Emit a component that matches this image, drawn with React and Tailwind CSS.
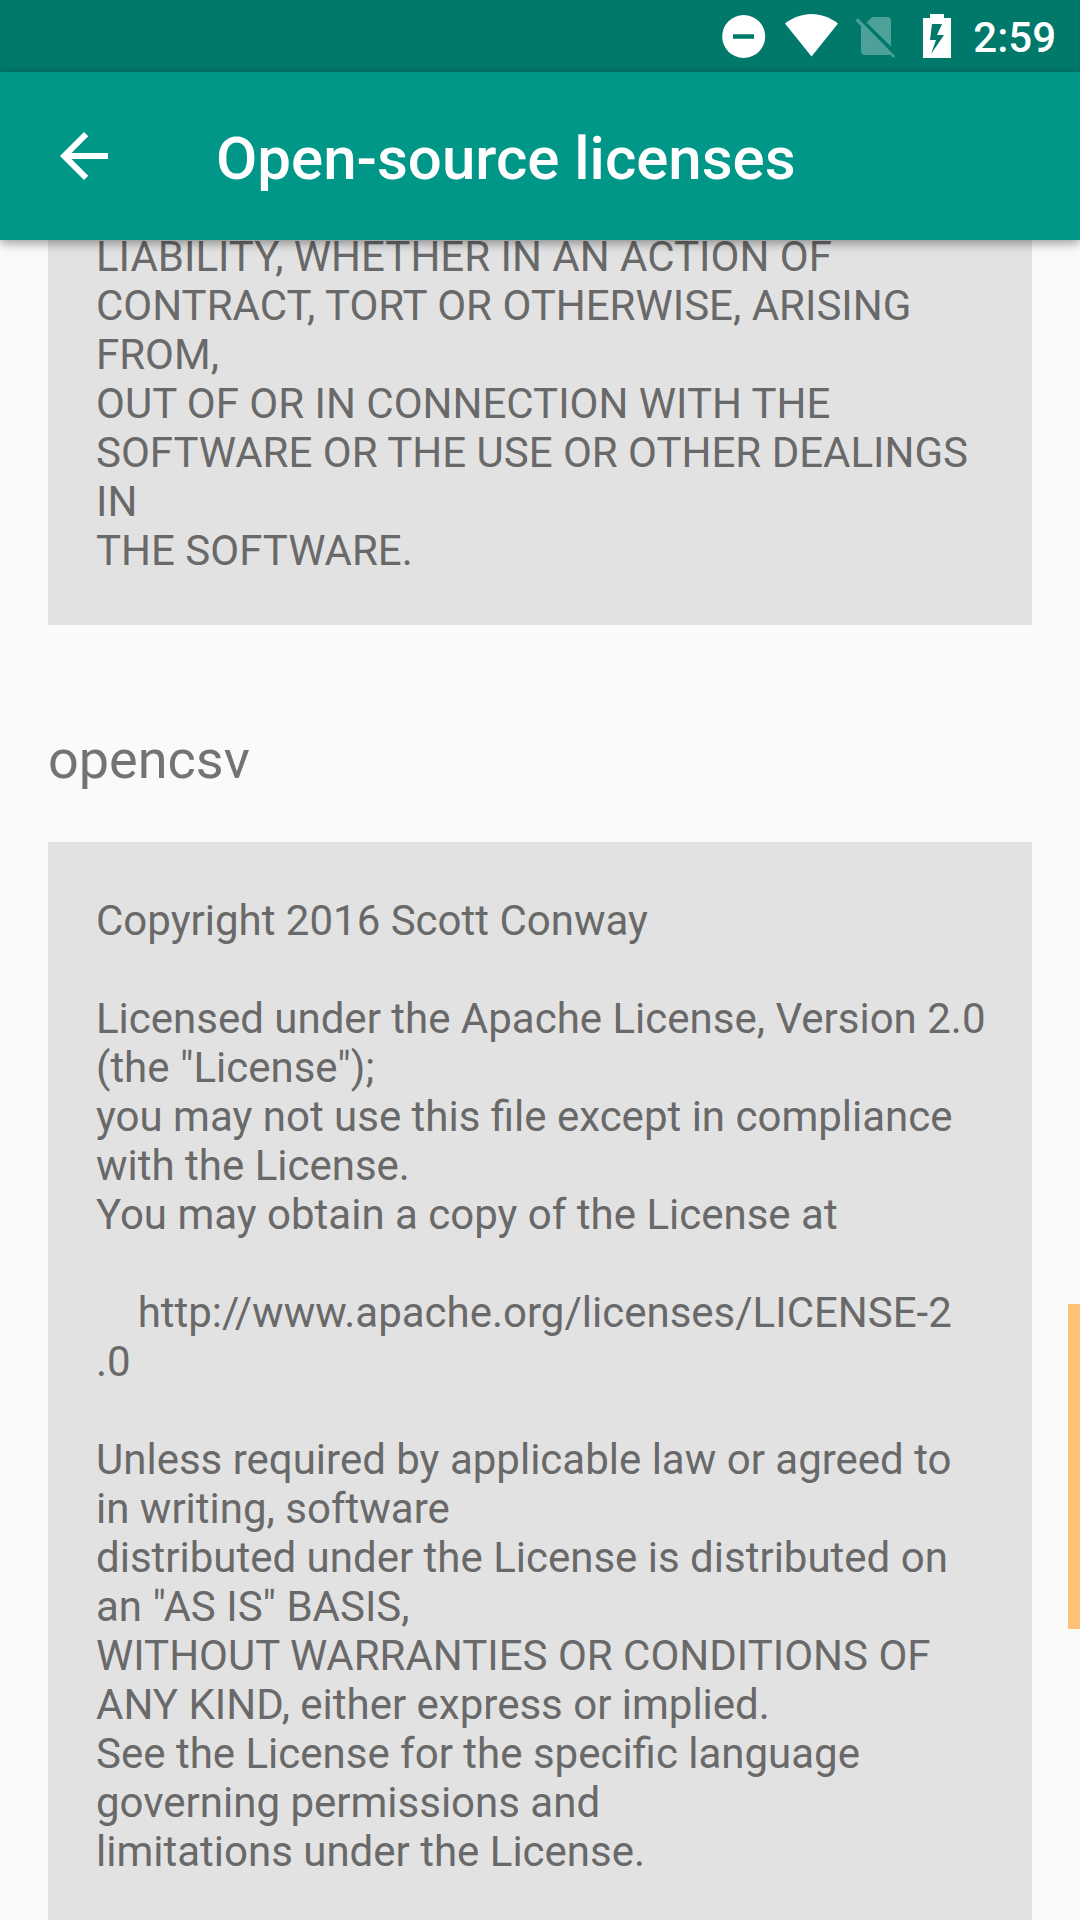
const BLOCK = "bg-[#e2e2e2] pr-11 pl-12 font-[Roboto,sans-serif] text-[42px] leading-[49px] text-[#696969] whitespace-pre-wrap break-words";

const MIT = `LIABILITY, WHETHER IN AN ACTION OF CONTRACT, TORT OR OTHERWISE, ARISING FROM,
OUT OF OR IN CONNECTION WITH THE SOFTWARE OR THE USE OR OTHER DEALINGS IN
THE SOFTWARE.`;

const APACHE = `Copyright 2016 Scott Conway

Licensed under the Apache License, Version 2.0 (the "License");
you may not use this file except in compliance with the License.
You may obtain a copy of the License at

    http://www.apache.org/licenses/LICENSE-2
.0

Unless required by applicable law or agreed to in writing, software
distributed under the License is distributed on an "AS IS" BASIS,
WITHOUT WARRANTIES OR CONDITIONS OF ANY KIND, either express or implied.
See the License for the specific language governing permissions and
limitations under the License.`;

function StatusBar() {
  return (
    <div className="flex h-[72px] shrink-0 items-center justify-end bg-[#00796b] pr-6 text-white">
      <svg className="mr-[19px] size-11" viewBox="0 0 44 44" fill="currentColor" role="img" aria-label="Do not disturb">
        <path fillRule="evenodd" d="M21.7 1a21.5 21.5 0 1 0 0 43 21.5 21.5 0 0 0 0-43zM32 24.7H11v-4.5h21z" />
      </svg>
      <svg className="mr-4 h-11 w-[54px]" viewBox="0 0 54 44" fill="currentColor" role="img" aria-label="Wi-Fi">
        <path d="M26.5 42.5 0 9.5C8 3.5 17 0 26.5 0S45 3.500 53 9.500z" />
      </svg>
      <svg className="mr-7 h-11 w-10 opacity-30" viewBox="0 0 40 44" fill="currentColor" role="img" aria-label="No SIM">
        <path d="M11.500 8.500 17 3h15.500Q36 3 36 6.500V32.500zM3 4.200.500 6.500 6 12V37q0 4 4 4H33q1 0 2-.5L38.300 44l1.700-2z" />
      </svg>
      <svg className="mr-[22px] h-11 w-7" viewBox="0 0 28 44" fill="currentColor" role="img" aria-label="Battery charging">
        <path fillRule="evenodd" d="M7 0h14v4h7v40H0V4h7zM9 10 7 26h6L8 40 21 21h-7l5-11z" />
      </svg>
      <span className="pt-0.5 text-[42px] leading-[49px] font-medium">2:59</span>
    </div>
  );
}

export default function App() {
  return (
    <div className="flex h-screen flex-col overflow-hidden bg-[#fafafa] font-[Roboto,sans-serif]">
      <StatusBar />
      <header className="relative z-10 flex h-[168px] shrink-0 items-center bg-[#009688] pl-12 text-white shadow-[0_3px_10px_rgba(0,0,0,0.4)]">
        <button type="button" aria-label="Back" className="mr-24 size-[72px]">
          <svg viewBox="0 0 24 24" fill="currentColor">
            <path d="M20 11H7.83l5.59-5.59L12 4l-8 8 8 8 1.41-1.41L7.83 13H20v-2z" />
          </svg>
        </button>
        <h1 className="pt-1.5 text-[60px] leading-[70px] font-medium">Open-source licenses</h1>
      </header>
      <main className="relative min-h-0 flex-1 overflow-hidden px-12">
        <pre className={BLOCK + " -mt-2 pb-[50px]"}>{MIT}</pre>
        <h2 className="pt-[103px] pb-[50px] text-[54px] leading-[64px] text-[#737373]">opencsv</h2>
        <pre className={BLOCK + " py-[54px]"}>{APACHE}</pre>
        <div className="absolute top-[1064px] right-0 h-[325px] w-3 bg-[#ffc176]" />
      </main>
    </div>
  );
}
